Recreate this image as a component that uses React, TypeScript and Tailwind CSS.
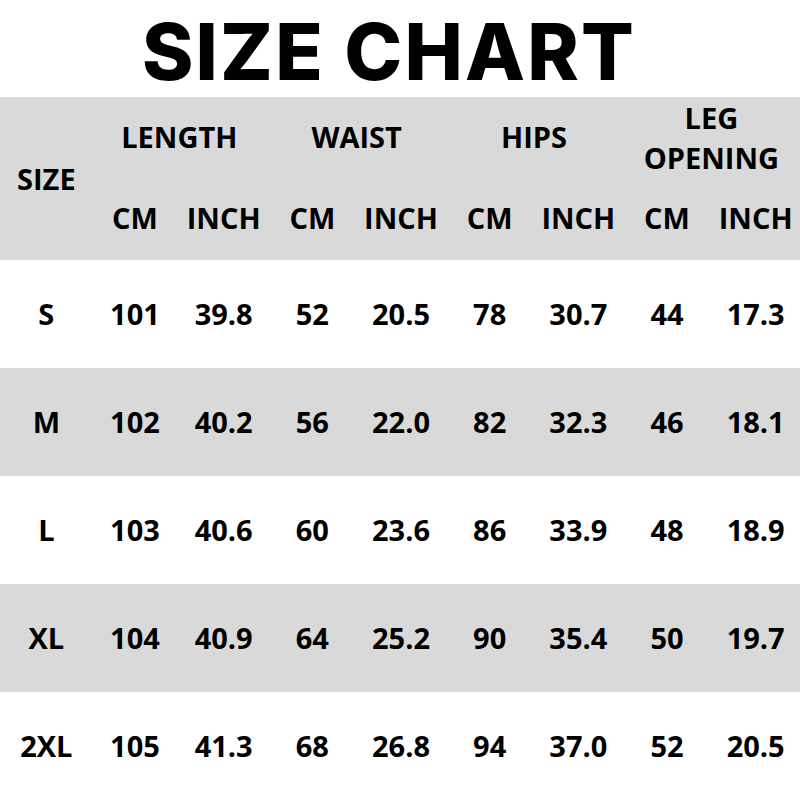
import React from "react";

const rows = [
  ["S", "101", "39.8", "52", "20.5", "78", "30.7", "44", "17.3"],
  ["M", "102", "40.2", "56", "22.0", "82", "32.3", "46", "18.1"],
  ["L", "103", "40.6", "60", "23.6", "86", "33.9", "48", "18.9"],
  ["XL", "104", "40.9", "64", "25.2", "90", "35.4", "50", "19.7"],
  ["2XL", "105", "41.3", "68", "26.8", "94", "37.0", "52", "20.5"],
];

export default function App() {
  return (
    <div className="w-[800px] h-[800px] bg-white text-black overflow-hidden flex flex-col">
      <div className="h-[97px] flex items-center justify-center pr-[22px]">
        <h1
          className="text-[78px] leading-none font-extrabold tracking-[2.2px] pt-[7px]"
          style={{ fontFamily: "Inter, 'Noto Sans', sans-serif" }}
        >
          SIZE CHART
        </h1>
      </div>
      <div
        className="flex flex-col text-[29px] font-bold"
        style={{ fontFamily: "'Open Sans', 'Noto Sans', sans-serif" }}
      >
        <div className="h-[163px] bg-[#d9d9d9] grid grid-cols-9 grid-rows-[80px_83px] pl-[2px]">
          <div className="row-span-2 flex items-center justify-center">SIZE</div>
          <div className="col-span-2 flex items-center justify-center">LENGTH</div>
          <div className="col-span-2 flex items-center justify-center">WAIST</div>
          <div className="col-span-2 flex items-center justify-center">HIPS</div>
          <div className="col-span-2 flex items-center justify-center text-center leading-[40px] pt-[1px]">
            LEG
            <br />
            OPENING
          </div>
          {["CM", "INCH", "CM", "INCH", "CM", "INCH", "CM", "INCH"].map((t, i) => (
            <div key={i} className="flex items-center justify-center pb-[1px]">
              {t}
            </div>
          ))}
        </div>
        {rows.map((r, i) => (
          <div
            key={i}
            className={`h-[108px] grid grid-cols-9 pl-[2px] ${i % 2 === 1 ? "bg-[#d9d9d9]" : "bg-white"}`}
          >
            {r.map((c, j) => (
              <div key={j} className="flex items-center justify-center">
                {c}
              </div>
            ))}
          </div>
        ))}
      </div>
    </div>
  );
}
